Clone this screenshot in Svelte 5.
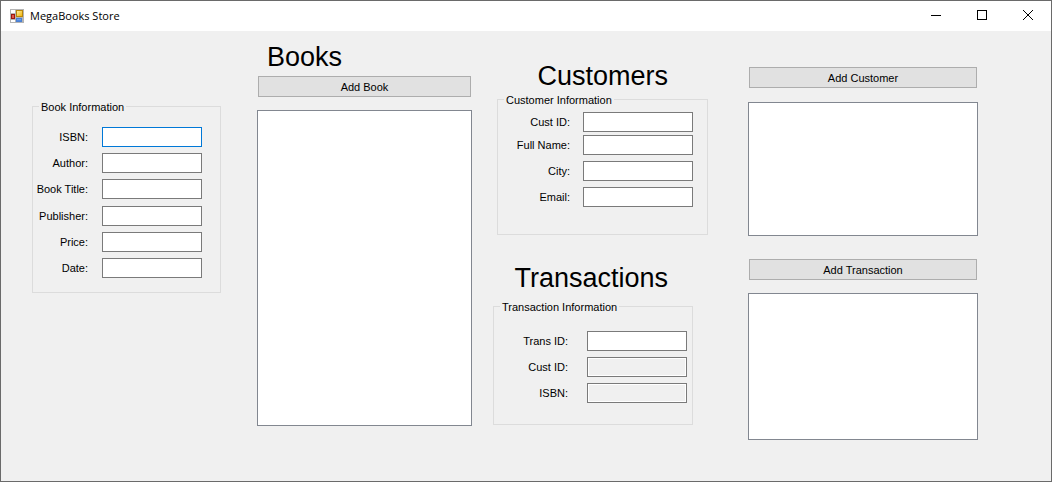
<script lang="ts">
  const bookFields = [
    { id: 'book-isbn', label: 'ISBN:', active: true },
    { id: 'book-author', label: 'Author:' },
    { id: 'book-title', label: 'Book Title:' },
    { id: 'book-publisher', label: 'Publisher:' },
    { id: 'book-price', label: 'Price:' },
    { id: 'book-date', label: 'Date:' }
  ];
  const customerFields = [
    { id: 'cust-id', label: 'Cust ID:' },
    { id: 'cust-name', label: 'Full Name:' },
    { id: 'cust-city', label: 'City:' },
    { id: 'cust-email', label: 'Email:' }
  ];
  const transactionFields = [
    { id: 'trans-id', label: 'Trans ID:' },
    { id: 'trans-cust', label: 'Cust ID:', readonly: true },
    { id: 'trans-isbn', label: 'ISBN:', readonly: true }
  ];
</script>

{#snippet group(kind, title, fields)}
  <fieldset class="group {kind}">
    <legend>{title}</legend>
    <div class="fields">
      {#each fields as field}
        <label for={field.id}>{field.label}</label>
        <input id={field.id} type="text" class:active={field.active} readonly={field.readonly} />
      {/each}
    </div>
  </fieldset>
{/snippet}

<div class="window">
  <header class="titlebar">
    <svg class="app-icon" width="14" height="14" viewBox="0 0 14 14" aria-hidden="true">
      <defs>
        <linearGradient id="gold" x1="0" y1="0" x2="1" y2="1">
          <stop offset="0" stop-color="#fff3a8" />
          <stop offset="1" stop-color="#f0b000" />
        </linearGradient>
        <linearGradient id="blue" x1="0" y1="0" x2="0" y2="1">
          <stop offset="0" stop-color="#8fb8f5" />
          <stop offset="1" stop-color="#2f6fd6" />
        </linearGradient>
      </defs>
      <rect x="0.5" y="0.5" width="13" height="13" fill="#fff" stroke="#b4b4b4" />
      <path d="M5.5 0V14M0 4.5H5M0 10.5H5M12.5 9V14M5 8.5H14" stroke="#b4b4b4" fill="none" />
      <rect x="6.5" y="1.5" width="6" height="6" fill="url(#gold)" stroke="#b8860b" />
      <rect x="1.5" y="5.5" width="3" height="4" fill="#e0584a" stroke="#9c1710" />
      <rect x="6.5" y="9.5" width="5" height="3" fill="url(#blue)" stroke="#4a7fd0" />
    </svg>
    <h1>MegaBooks Store</h1>
    <div class="controls">
      <button type="button" aria-label="Minimize">
        <svg width="10" height="10" viewBox="0 0 10 10"><path d="M0 5.5H10" /></svg>
      </button>
      <button type="button" aria-label="Maximize">
        <svg width="10" height="10" viewBox="0 0 10 10"><rect x="0.5" y="0.5" width="9" height="9" /></svg>
      </button>
      <button type="button" aria-label="Close">
        <svg width="10" height="10" viewBox="0 0 10 10"><path d="M0 0L10 10M10 0L0 10" /></svg>
      </button>
    </div>
  </header>

  <main>
    <section class="book-entry">
      {@render group('book', 'Book Information', bookFields)}
    </section>

    <section class="books">
      <h2>Books</h2>
      <button type="button" class="action">Add Book</button>
      <select class="list tall" size="10" aria-label="Books"></select>
    </section>

    <section class="entry">
      <h2>Customers</h2>
      {@render group('customer', 'Customer Information', customerFields)}
      <h2>Transactions</h2>
      {@render group('transaction', 'Transaction Information', transactionFields)}
    </section>

    <section class="records">
      <button type="button" class="action">Add Customer</button>
      <select class="list customers" size="6" aria-label="Customers"></select>
      <button type="button" class="action">Add Transaction</button>
      <select class="list transactions" size="6" aria-label="Transactions"></select>
    </section>
  </main>
</div>

<style>
  :global(body) {
    margin: 0;
    background: #f0f0f0;
  }

  .window {
    box-sizing: border-box;
    min-height: 100vh;
    border: 1px solid #6a6a6a;
    background: #f0f0f0;
    color: #000;
    font-family: "Liberation Sans", Arial, sans-serif;
    font-size: 11px;
  }

  .titlebar {
    display: flex;
    align-items: center;
    height: 30px;
    padding-left: 9px;
    background: #fff;
  }

  .app-icon {
    flex: none;
  }

  h1 {
    flex: 1;
    margin: 0 0 0 6px;
    font: 400 11px/16px "Open Sans", "Noto Sans", sans-serif;
  }

  .controls {
    display: flex;
    height: 100%;
  }

  .controls button {
    display: flex;
    align-items: center;
    justify-content: center;
    width: 46px;
    padding: 0 0 2px;
    border: 0;
    background: none;
  }

  .controls svg {
    fill: none;
    stroke: #000;
    stroke-width: 1px;
  }

  main {
    display: grid;
    grid-template-columns: 189fr 36px 215fr 21px 215fr 40px 230fr;
    align-items: start;
    padding: 0 73px 20px 31px;
  }

  section {
    display: flex;
    flex-direction: column;
    min-width: 0;
  }

  .book-entry {
    grid-column: 1;
    padding-top: 68px;
  }

  .books {
    grid-column: 3;
    padding-top: 11px;
  }

  .entry {
    grid-column: 5;
    padding-top: 30px;
  }

  .records {
    grid-column: 7;
    padding-top: 36px;
  }

  h2 {
    margin: 0;
    font-size: 27px;
    font-weight: 400;
    line-height: 30px;
  }

  .books h2 {
    padding: 0 0 4px 10px;
  }

  .entry h2 {
    padding-right: 40px;
    text-align: right;
  }

  .group {
    box-sizing: border-box;
    min-width: 0;
    margin: 0;
    padding: 0 18px 0 3px;
    border: 1px solid #dcdcdc;
  }

  legend {
    margin-left: 3px;
    padding: 2px 2px 0;
    line-height: 13px;
  }

  .fields {
    display: grid;
  }

  .fields label {
    line-height: 20px;
    text-align: right;
    white-space: nowrap;
  }

  .fields input {
    box-sizing: border-box;
    width: 100%;
    height: 20px;
    padding: 1px 3px;
    border: 1px solid #7a7a7a;
    border-radius: 0;
    outline: 0;
    background: #fff;
    font: inherit;
  }

  .fields input:read-only {
    background: #f0f0f0;
    box-shadow: inset 0 0 0 1px #fff;
  }

  .fields input.active,
  .fields input:focus {
    border-color: #0078d7;
  }

  .book {
    height: 194px;
  }

  .book .fields {
    grid-template-columns: minmax(0, 52fr) minmax(0, 100fr);
    grid-template-rows: 26px 26px 27px 26px 26px 20px;
    column-gap: 14px;
    padding-top: 13px;
  }

  .customer {
    height: 143px;
    margin: 1px 0 0 4px;
    padding-right: 14px;
  }

  .customer .fields {
    grid-template-columns: minmax(0, 69fr) minmax(0, 110fr);
    grid-template-rows: 23px 26px 26px 20px;
    column-gap: 13px;
    padding-top: 5px;
  }

  .transaction {
    height: 126px;
    margin: 6px 15px 0 0;
    padding-right: 5px;
  }

  .transaction .fields {
    grid-template-columns: minmax(0, 71fr) minmax(0, 100fr);
    grid-template-rows: 26px 26px 20px;
    column-gap: 19px;
    padding-top: 17px;
  }

  .customer + h2 {
    margin-top: 28px;
  }

  .action {
    height: 21px;
    margin: 0 1px;
    padding: 0;
    border: 1px solid #adadad;
    border-radius: 0;
    background: #e1e1e1;
    color: #000;
    font: inherit;
  }

  .list {
    box-sizing: border-box;
    width: 100%;
    margin: 13px 0 0;
    border: 1px solid #828790;
    border-radius: 0;
    outline: 0;
    background: #fff;
    font: inherit;
  }

  .tall {
    height: 316px;
  }

  .customers {
    height: 134px;
    margin: 14px 0 23px;
  }

  .transactions {
    height: 147px;
  }
</style>
